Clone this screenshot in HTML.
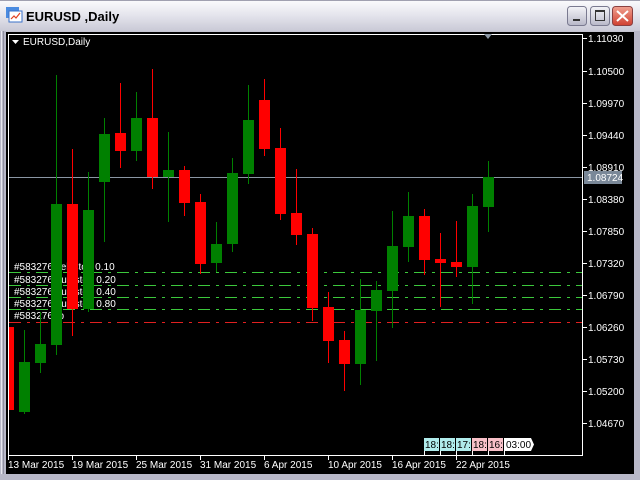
<!DOCTYPE html>
<html><head><meta charset="utf-8"><style>
html,body{margin:0;padding:0;width:640px;height:480px;overflow:hidden;background:#c8c8d0;}
svg{display:block}
text{font-family:"Liberation Sans",sans-serif;}
</style></head><body>
<svg width="640" height="480" viewBox="0 0 640 480" xmlns="http://www.w3.org/2000/svg">
<defs>
<linearGradient id="tb" x1="0" y1="0" x2="0" y2="1">
<stop offset="0" stop-color="#fbfbfd"/><stop offset="0.5" stop-color="#e4e4ec"/><stop offset="1" stop-color="#c9c9d6"/>
</linearGradient>
<linearGradient id="bt" x1="0" y1="0" x2="0" y2="1">
<stop offset="0" stop-color="#f4f4f8"/><stop offset="1" stop-color="#b8b8c8"/>
</linearGradient>
<linearGradient id="cl" x1="0" y1="0" x2="0" y2="1">
<stop offset="0" stop-color="#f0a090"/><stop offset="1" stop-color="#d04030"/>
</linearGradient>
</defs>
<rect x="0" y="0" width="640" height="480" fill="#c4c4d0"/>
<rect x="0" y="0" width="640" height="31" fill="url(#tb)"/>
<rect x="0" y="0" width="640" height="1" fill="#a0a0b0"/>
<!-- left frame stripes -->
<rect x="0" y="31" width="6" height="449" fill="#b8b8c8"/>
<rect x="1" y="31" width="1" height="449" fill="#e8e8f0"/>
<rect x="3" y="31" width="1" height="449" fill="#9090a0"/>
<rect x="634" y="31" width="6" height="449" fill="#b8b8c8"/>
<rect x="0" y="474" width="640" height="6" fill="#b8b8c8"/>
<!-- title icon -->
<rect x="6" y="7" width="13" height="11" fill="#4a8be0"/>
<rect x="9" y="11" width="13" height="11" fill="#fff" stroke="#3a70c8"/>
<polyline points="11,19 14,16 16,18 20,13" fill="none" stroke="#e04020" stroke-width="1.2"/>
<text x="26" y="21" font-size="13" font-weight="bold" fill="#000">EURUSD ,Daily</text>
<!-- buttons -->
<rect x="567.5" y="6.5" width="19" height="19" rx="3" fill="url(#bt)" stroke="#7a7a90"/>
<rect x="573" y="19" width="7" height="2" fill="#333"/>
<rect x="590.5" y="6.5" width="19" height="19" rx="3" fill="url(#bt)" stroke="#7a7a90"/>
<rect x="595.5" y="10.5" width="9" height="10" fill="none" stroke="#333"/><rect x="595" y="10" width="10" height="2" fill="#333"/>
<rect x="612.5" y="6.5" width="20" height="19" rx="3" fill="url(#cl)" stroke="#8a4040"/>
<path d="M617,11 L628,21 M628,11 L617,21" stroke="#fff" stroke-width="2"/>
<!-- chart area -->
<rect x="6" y="32" width="628" height="442" fill="#000"/>
<rect x="8.5" y="34.5" width="574" height="421" fill="none" stroke="#fff"/>
<text x="23" y="45" font-size="10" fill="#fff">EURUSD,Daily</text>
<path d="M12,40 L19,40 L15.5,44 Z" fill="#fff"/>
<path d="M484,34 L492,34 L488,39 Z" fill="#8a96a4"/>
<!-- price axis -->
<g font-size="10" fill="#fff" stroke="none">
<text x="588" y="42">1.11030</text><text x="588" y="75">1.10500</text><text x="588" y="107">1.09970</text>
<text x="588" y="139">1.09440</text><text x="588" y="171">1.08910</text><text x="588" y="203">1.08380</text>
<text x="588" y="235">1.07850</text><text x="588" y="267">1.07320</text><text x="588" y="299">1.06790</text>
<text x="588" y="331">1.06260</text><text x="588" y="363">1.05730</text><text x="588" y="395">1.05200</text>
<text x="588" y="427">1.04670</text>
</g>
<g stroke="#fff"><path d="M583,38.5h4M583,71.5h4M583,103.5h4M583,135.5h4M583,167.5h4M583,199.5h4M583,231.5h4M583,263.5h4M583,295.5h4M583,327.5h4M583,359.5h4M583,391.5h4M583,423.5h4"/></g>
<!-- date axis -->
<g stroke="#fff"><path d="M8.5,456v4M72.5,456v4M136.5,456v4M200.5,456v4M264.5,456v4M328.5,456v4M392.5,456v4M456.5,456v4"/></g>
<g font-size="10" fill="#fff">
<text x="8" y="468">13 Mar 2015</text><text x="72" y="468">19 Mar 2015</text><text x="136" y="468">25 Mar 2015</text>
<text x="200" y="468">31 Mar 2015</text><text x="264" y="468">6 Apr 2015</text><text x="328" y="468">10 Apr 2015</text>
<text x="392" y="468">16 Apr 2015</text><text x="456" y="468">22 Apr 2015</text>
</g>
<!-- order labels -->
<g font-size="10" fill="#fff">
<text x="14" y="270">#583276 sell stop 0.10</text>
<text x="14" y="283">#583276 buy stop 0.20</text>
<text x="14" y="295">#583276 buy stop 0.40</text>
<text x="14" y="307">#583276 buy stop 0.80</text>
<text x="14" y="319">#583276 tp</text>
</g>
<!-- order lines -->
<g stroke="#3cc83c" stroke-dasharray="12,6,3,6" fill="none">
<path d="M9,272.5H582M9,285.5H582M9,297.5H582M9,309.5H582"/>
</g>
<path d="M9,322.5H582" stroke="#e02020" stroke-dasharray="12,6,3,6"/>
<!-- bid line -->
<path d="M9,177.5H582" stroke="#8a96a4"/>
<rect x="584" y="171" width="38" height="13" fill="#7a8898"/>
<text x="587" y="181" font-size="10" fill="#fff">1.08724</text>
<!-- candles -->
<g id="c">
<rect x="9" y="327" width="5" height="83" fill="#f00"/>
<path d="M24.5,330V414M40.5,312V373M56.5,75V355M88.5,172V312M104.5,118V242M136.5,92V161M168.5,132V222M216.5,222V272M232.5,158V252M248.5,85V184M360.5,279V385M376.5,281V361M392.5,211V328M408.5,192V262M472.5,194V304M488.5,161V232" stroke="#008000"/>
<path d="M72.5,149V336M120.5,83V168M152.5,69V189M184.5,166V216M200.5,194V274M264.5,79V156M280.5,128V220M296.5,169V245M312.5,228V321M328.5,292V363M344.5,331V391M424.5,209V275M440.5,233V307M456.5,221V277" stroke="#f00"/>
<g fill="#008000">
<rect x="19" y="362" width="11" height="50"/><rect x="35" y="344" width="11" height="19"/>
<rect x="51" y="204" width="11" height="141"/><rect x="83" y="210" width="11" height="99"/>
<rect x="99" y="134" width="11" height="48"/><rect x="131" y="118" width="11" height="33"/>
<rect x="163" y="170" width="11" height="7"/><rect x="211" y="244" width="11" height="19"/>
<rect x="227" y="173" width="11" height="71"/><rect x="243" y="120" width="11" height="54"/>
<rect x="355" y="310" width="11" height="54"/><rect x="371" y="290" width="11" height="21"/>
<rect x="387" y="246" width="11" height="45"/><rect x="403" y="216" width="11" height="31"/>
<rect x="467" y="206" width="11" height="61"/><rect x="483" y="177" width="11" height="30"/>
</g>
<g fill="#f00">
<rect x="67" y="204" width="11" height="105"/><rect x="115" y="133" width="11" height="18"/>
<rect x="147" y="118" width="11" height="59"/><rect x="179" y="170" width="11" height="33"/>
<rect x="195" y="202" width="11" height="62"/><rect x="259" y="100" width="11" height="49"/>
<rect x="275" y="148" width="11" height="66"/><rect x="291" y="213" width="11" height="22"/>
<rect x="307" y="234" width="11" height="74"/><rect x="323" y="307" width="11" height="34"/>
<rect x="339" y="340" width="11" height="24"/><rect x="419" y="216" width="11" height="44"/>
<rect x="435" y="259" width="11" height="4"/><rect x="451" y="262" width="11" height="5"/>
</g>
</g>
<!-- session boxes -->
<g font-size="10" fill="#000" stroke="none">
<rect x="424" y="438" width="15" height="13" fill="#b0ecec"/><text x="425" y="448">18:</text>
<rect x="440" y="438" width="15" height="13" fill="#b0ecec"/><text x="441" y="448">18:</text>
<rect x="456" y="438" width="15" height="13" fill="#b0ecec"/><text x="457" y="448">17:</text>
<rect x="472" y="438" width="15" height="13" fill="#f8c0c8"/><text x="473" y="448">18:</text>
<rect x="488" y="438" width="15" height="13" fill="#f8c0c8"/><text x="489" y="448">16:0</text>
<path d="M504,438H531L534,444.5L531,451H504Z" fill="#fff"/><text x="506" y="448">03:00</text>
</g>
<g stroke="#fff"><path d="M424.5,451v4M440.5,451v4M456.5,451v4M472.5,451v4M488.5,451v4M504.5,451v4"/></g>
</svg>
</body></html>
